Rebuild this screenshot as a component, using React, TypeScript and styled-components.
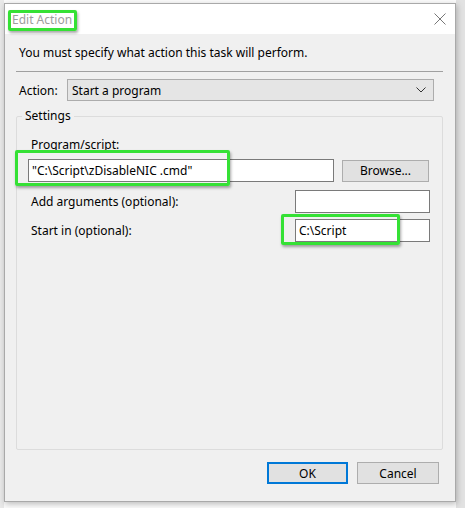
import React from 'react';
import styled, { createGlobalStyle } from 'styled-components';

const GlobalStyle = createGlobalStyle`
	html, body {
		margin: 0;
		padding: 0;
		background: #f4f4f4;
	}
	* {
		box-sizing: border-box;
	}
`;

const Backdrop = styled.div`
	width: 465px;
	height: 508px;
	padding: 3px 9px 6px 4px;
	background: linear-gradient(to right, #e9e9e9 0, #e9e9e9 4px, #fbfbfb 4px, #fbfbfb 456px, #e2e2e2 456px);
	font: 12px 'Noto Sans', 'Segoe UI', sans-serif;
	color: #000;
`;

const Dialog = styled.div`
	display: flex;
	flex-direction: column;
	width: 452px;
	height: 499px;
	border: 1px solid #a9a9a9;
	background: #f0f0f0;
	box-shadow: 1px 2px 6px rgba(0, 0, 0, 0.25);
`;

const TitleBar = styled.div`
	display: flex;
	align-items: center;
	justify-content: space-between;
	height: 30px;
	padding: 0 9px 0 5px;
	background: #fff;
`;

const Highlight = styled.div<{ l: number; t: number; r: number; b: number }>`
	position: relative;
	display: inline-flex;
	&::after {
		content: '';
		position: absolute;
		left: ${(p) => p.l}px;
		top: ${(p) => p.t}px;
		right: ${(p) => p.r}px;
		bottom: ${(p) => p.b}px;
		border: 3px solid #35e135;
		border-radius: 2px;
		box-shadow: 1px 2px 3px rgba(0, 0, 0, 0.35);
		pointer-events: none;
	}
`;

const Title = styled.span`
	color: #9d9d9d;
	font-size: 12px;
	padding: 2px 2px;
`;

const CloseIcon = styled.svg`
	width: 12px;
	height: 12px;
`;

const Body = styled.div`
	display: flex;
	flex: 1;
	flex-direction: column;
	padding: 0 12px 0 11px;
`;

const Intro = styled.p`
	margin: 11px 0 0 3px;
	line-height: 16px;
`;

const Separator = styled.hr`
	margin: 10px 0 0 0;
	border: none;
	border-top: 1px solid #a0a0a0;
	height: 0;
`;

const ActionRow = styled.div`
	display: flex;
	align-items: center;
	margin-top: 7px;
	padding-left: 3px;
	padding-right: 9px;
`;

const ActionLabel = styled.span`
	width: 48px;
`;

const Select = styled.div`
	display: flex;
	flex: 1;
	align-items: center;
	justify-content: space-between;
	height: 22px;
	padding: 0 7px 0 4px;
	background: #e5e5e5;
	border: 1px solid #acacac;
`;

const Group = styled.fieldset`
	display: flex;
	flex-direction: column;
	margin: 8px 0 0 0;
	padding: 13px 12px 0 11px;
	height: 341px;
	border: 1px solid #dcdcdc;
	border-radius: 2px;
	min-width: 0;
`;

const Legend = styled.legend`
	margin-left: -6px;
	padding: 0 3px;
	line-height: 14px;
`;

const FieldLabel = styled.span`
	padding-left: 3px;
`;

const ProgramRow = styled.div`
	display: flex;
	align-items: center;
	gap: 8px;
	margin-top: 6px;
`;

const TextBox = styled.div<{ $width: number }>`
	display: flex;
	align-items: center;
	width: ${(p) => p.$width}px;
	height: 23px;
	padding: 0 3px;
	background: #fff;
	border: 1px solid #7a7a7a;
	white-space: nowrap;
`;

const Button = styled.div<{ $default?: boolean; $width: number }>`
	display: flex;
	align-items: center;
	justify-content: center;
	width: ${(p) => p.$width}px;
	height: 22px;
	background: #e1e1e1;
	border: ${(p) => (p.$default ? '2px solid #0078d7' : '1px solid #adadad')};
`;

const OptionRow = styled.div<{ $top: number }>`
	display: flex;
	align-items: center;
	justify-content: space-between;
	margin-top: ${(p) => p.$top}px;
`;

const Footer = styled.div`
	display: flex;
	justify-content: flex-end;
	gap: 9px;
	padding: 12px 4px 0 0;
`;

const Chevron = () => (
	<svg width="10" height="6" viewBox="0 0 10 6">
		<path d="M0.5 0.5 L5 5 L9.5 0.5" fill="none" stroke="#333" strokeWidth="1" />
	</svg>
);

export default function App() {
	return (
		<>
			<GlobalStyle />
			<Backdrop>
				<Dialog>
					<TitleBar>
						<Highlight l={-2} t={1} r={-3} b={-1}>
							<Title>Edit Action</Title>
						</Highlight>
						<CloseIcon viewBox="0 0 12 12">
							<path d="M0.5 0.5 L11.5 11.5 M11.5 0.5 L0.5 11.5" stroke="#777" strokeWidth="1" />
						</CloseIcon>
					</TitleBar>
					<Body>
						<Intro>You must specify what action this task will perform.</Intro>
						<Separator />
						<ActionRow>
							<ActionLabel>Action:</ActionLabel>
							<Select>
								<span>Start a program</span>
								<Chevron />
							</Select>
						</ActionRow>
						<Group>
							<Legend>Settings</Legend>
							<FieldLabel>Program/script:</FieldLabel>
							<ProgramRow>
								<Highlight l={-13} t={-9} r={104} b={-4}>
									<TextBox $width={306}>"C:\Script\zDisableNIC .cmd"</TextBox>
								</Highlight>
								<Button $width={87}>Browse...</Button>
							</ProgramRow>
							<OptionRow $top={8}>
								<FieldLabel>Add arguments (optional):</FieldLabel>
								<TextBox $width={135} />
							</OptionRow>
							<OptionRow $top={6}>
								<FieldLabel>Start in (optional):</FieldLabel>
								<Highlight l={-14} t={-5} r={30} b={-3}>
									<TextBox $width={135}>C:\Script</TextBox>
								</Highlight>
							</OptionRow>
						</Group>
						<Footer>
							<Button $default $width={81}>OK</Button>
							<Button $width={82}>Cancel</Button>
						</Footer>
					</Body>
				</Dialog>
			</Backdrop>
		</>
	);
}
